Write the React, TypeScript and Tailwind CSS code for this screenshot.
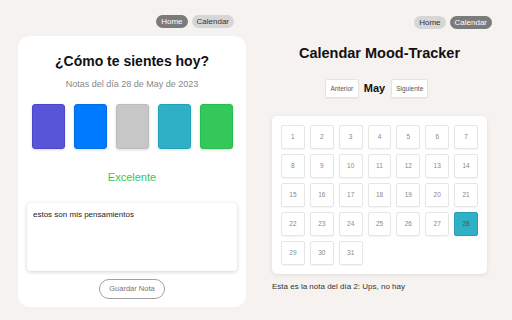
import React from 'react';

const moods = [
  { bg: 'bg-[#5856d6]', border: 'border-[#4a48c8]' },
  { bg: 'bg-[#007aff]', border: 'border-[#006ee8]' },
  { bg: 'bg-[#c7c7c7]', border: 'border-[#bcbcbc]' },
  { bg: 'bg-[#30b0c7]', border: 'border-[#22a2ba]' },
  { bg: 'bg-[#34c759]', border: 'border-[#28bb4d]' },
];

const days = Array.from({ length: 31 }, (_, i) => i + 1);

const Nav = ({ active }: { active: 'home' | 'calendar' }) => {
  const on = 'bg-[#7b7b7b] text-white';
  const off = 'bg-[#d6d6d6] text-[#333]';
  return (
    <div className="flex justify-end gap-[4px] h-[13px]">
      <span className={`px-[5px] rounded-full text-[8px] leading-[13px] ${active === 'home' ? on : off}`}>Home</span>
      <span className={`px-[5px] rounded-full text-[8px] leading-[13px] ${active === 'calendar' ? on : off}`}>Calendar</span>
    </div>
  );
};

const App = () => {
  return (
    <div className="w-[512px] h-[320px] bg-[#f6f2ef] flex font-['Liberation_Sans',Arial,sans-serif] overflow-hidden">
      {/* Left: mood entry */}
      <div className="w-[256px] pt-[15px]">
        <div className="pr-[22px]">
          <Nav active="home" />
        </div>
        <div className="mt-[8px] ml-[18px] w-[228px] bg-white rounded-[12px] pt-[17px] pb-[8px] flex flex-col items-center">
          <h1 className="text-[14px] leading-[16px] font-bold text-[#111]">¿Cómo te sientes hoy?</h1>
          <p className="mt-[10px] text-[9px] leading-[11px] text-[#888]">Notas del día 28 de May de 2023</p>
          <div className="mt-[14px] flex gap-[9px]">
            {moods.map((m, i) => (
              <div key={i} className={`w-[33px] h-[45px] rounded-[3px] border ${m.bg} ${m.border} shadow-[0_1px_3px_rgba(0,0,0,0.15)]`} />
            ))}
          </div>
          <p className="mt-[22px] text-[11px] leading-[13px] text-[#34c759]">Excelente</p>
          <div className="mt-[19px] w-[210px] h-[68px] bg-white rounded-[4px] shadow-[0_1px_4px_rgba(0,0,0,0.18)] px-[6px] pt-[7px] text-[8px] leading-[10px] text-[#222]">
            estos son mis pensamientos
          </div>
          <button className="mt-[8px] w-[66px] h-[20px] rounded-full border border-[#a0a0a0] bg-white text-[7.5px] text-[#777]">
            Guardar Nota
          </button>
        </div>
      </div>

      {/* Right: calendar */}
      <div className="w-[256px] pt-[16px]">
        <div className="pr-[20px]">
          <Nav active="calendar" />
        </div>
        <div className="ml-[16px] w-[215px] flex flex-col">
          <h2 className="mt-[16px] text-center text-[14.5px] leading-[17px] font-bold text-[#111]">Calendar Mood-Tracker</h2>
          <div className="mt-[17px] pr-[6px] flex justify-center items-center gap-[5px]">
            <button className="h-[19px] w-[34px] bg-white border border-[#e4e4e4] rounded-[2px] shadow-[0_1px_1px_rgba(0,0,0,0.05)] text-[6.5px] text-[#555]">Anterior</button>
            <span className="text-[11px] font-bold text-[#111]">May</span>
            <button className="ml-[1px] h-[19px] w-[37px] bg-white border border-[#e4e4e4] rounded-[2px] shadow-[0_1px_1px_rgba(0,0,0,0.05)] text-[6.5px] text-[#555]">Siguiente</button>
          </div>
          <div className="mt-[18px] bg-white rounded-[5px] shadow-[0_1px_4px_rgba(0,0,0,0.1)] p-[9px] grid grid-cols-7 gap-[5px]">
            {days.map((d) => (
              <div
                key={d}
                className={`h-[24px] rounded-[2px] border flex items-center justify-center text-[6.5px] shadow-[0_1px_1px_rgba(0,0,0,0.04)] ${
                  d === 28 ? 'bg-[#30b0c7] border-[#2aa0b6] text-[#555]' : 'bg-white border-[#e6e6e6] text-[#888]'
                }`}
              >
                {d}
              </div>
            ))}
          </div>
          <p className="mt-[8px] text-[8px] leading-[10px] text-[#333]">Esta es la nota del día 2: Ups, no hay</p>
        </div>
      </div>
    </div>
  );
};

export default App;
